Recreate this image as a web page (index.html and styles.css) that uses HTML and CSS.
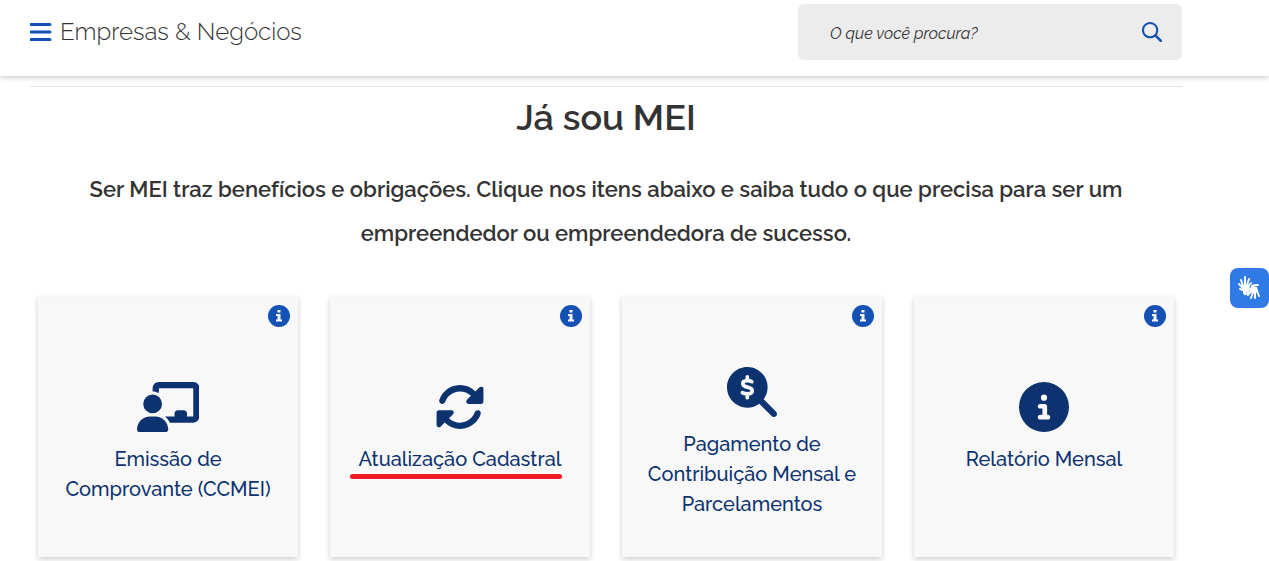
FILE: index.html
```html
<!DOCTYPE html>
<html lang="pt-BR">
<head>
  <meta charset="UTF-8" />
  <meta name="viewport" content="width=device-width, initial-scale=1.0" />
  <title>Empresas &amp; Negócios</title>
  <link rel="stylesheet" href="styles.css">
</head>
<body>
  <!-- shared icons -->
  <svg class="sprite" aria-hidden="true">
    <symbol id="info" viewBox="0 0 512 512">
      <path d="M256 512A256 256 0 1 0 256 0a256 256 0 1 0 0 512zM216 336h24V272H216c-13.3 0-24-10.7-24-24s10.7-24 24-24h48c13.3 0 24 10.7 24 24v88h8c13.3 0 24 10.7 24 24s-10.7 24-24 24H216c-13.3 0-24-10.7-24-24s10.7-24 24-24zm40-208a32 32 0 1 1 0 64 32 32 0 1 1 0-64z"/>
    </symbol>
    <symbol id="info-small" viewBox="0 0 22 22">
      <circle cx="11" cy="11" r="11"/>
      <path fill="#fff" d="M9.5 5h3v2.5h-3zM8 9h4.500v5.500H14V16.500H8V14.500H9.500V11H8z"/>
    </symbol>
  </svg>

  <header class="header">
    <div class="container header-row">
      <div class="brand">
        <button class="icon-btn" type="button" aria-label="Menu">
          <svg width="22" height="24" viewBox="0 0 22 24"><path d="M1 3H20a1.500 1.500 0 0 1 0 3H1a1.500 1.500 0 0 1 0-3zM1 10.500H20a1.500 1.500 0 0 1 0 3H1a1.500 1.500 0 0 1 0-3zM1 18H20a1.500 1.500 0 0 1 0 3H1a1.500 1.500 0 0 1 0-3z"/></svg>
        </button>
        <a class="site-name" href="#">Empresas &amp; Negócios</a>
      </div>
      <form class="search" role="search">
        <input type="text" placeholder="O que você procura?" aria-label="O que você procura?" />
        <button class="icon-btn" type="submit" aria-label="Buscar">
          <svg width="20" height="20" viewBox="0 0 512 512"><path d="M416 208c0 45.9-14.9 88.3-40 122.7L502.6 457.4c12.5 12.5 12.5 32.8 0 45.3s-32.8 12.5-45.3 0L330.7 376c-34.4 25.2-76.8 40-122.7 40C93.1 416 0 322.9 0 208S93.1 0 208 0S416 93.1 416 208zM208 364a156 156 0 1 0 0-312 156 156 0 1 0 0 312z"/></svg>
        </button>
      </form>
    </div>
  </header>

  <main class="container">
    <div class="content">
      <h1>Já sou MEI</h1>
      <p class="intro">Ser MEI traz benefícios e obrigações. Clique nos itens abaixo e saiba tudo o que precisa para ser um empreendedor ou empreendedora de sucesso.</p>

      <div class="cards">
        <div class="card">
          <button class="card-info" type="button" aria-label="Mais informações"><svg width="22" height="22"><use href="#info-small"/></svg></button>
          <a class="card-link" href="#">
            <svg class="card-icon" viewBox="0 0 640 512"><path d="M160 64c0-35.3 28.7-64 64-64H576c35.3 0 64 28.7 64 64V352c0 35.3-28.7 64-64 64H336.8c-11.8-25.5-29.9-47.5-52.4-64H384V320c0-17.7 14.3-32 32-32h64c17.7 0 32 14.3 32 32v32h64V64L224 64v49.1C205.2 102.2 183.3 96 160 96V64zm0 64a96 96 0 1 1 0 192 96 96 0 1 1 0-192zM133.3 352h53.3C260.3 352 320 411.7 320 485.3c0 14.7-11.9 26.7-26.7 26.7H26.7C11.9 512 0 500.1 0 485.3C0 411.7 59.7 352 133.3 352z"/></svg>
            <span class="card-label">Emissão de Comprovante (CCMEI)</span>
          </a>
        </div>

        <div class="card">
          <button class="card-info" type="button" aria-label="Mais informações"><svg width="22" height="22"><use href="#info-small"/></svg></button>
          <a class="card-link" href="#">
            <svg class="card-icon" viewBox="0 0 512 512"><path d="M142.9 142.9c62.2-62.2 162.7-62.5 225.3-1L327 183c-6.9 6.9-8.9 17.2-5.2 26.2s12.5 14.8 22.2 14.8H472c13.3 0 24-10.7 24-24V72c0-9.7-5.8-18.5-14.8-22.2s-19.3-1.7-26.2 5.2L413.4 96.6c-87.6-86.5-228.7-86.2-315.8 1C73.2 122 55.6 150.7 44.8 181.4c-5.9 16.7 2.9 34.9 19.5 40.8s34.9-2.9 40.8-19.5c7.7-21.8 20.2-42.3 37.8-59.8zM16 312V440c0 9.7 5.8 18.5 14.8 22.2s19.3 1.7 26.2-5.2l41.6-41.6c87.6 86.5 228.7 86.2 315.8-1c24.4-24.4 42.1-53.1 52.9-83.7c5.9-16.7-2.9-34.9-19.5-40.8s-34.9 2.9-40.8 19.5c-7.7 21.8-20.2 42.3-37.8 59.8c-62.2 62.2-162.7 62.5-225.3 1L185 329c6.9-6.9 8.9-17.2 5.2-26.2s-12.5-14.8-22.2-14.8H40c-13.3 0-24 10.7-24 24z"/></svg>
            <span class="card-label"><span class="marked">Atualização Cadastral</span></span>
          </a>
        </div>

        <div class="card">
          <button class="card-info" type="button" aria-label="Mais informações"><svg width="22" height="22"><use href="#info-small"/></svg></button>
          <a class="card-link" href="#">
            <svg class="card-icon" viewBox="0 0 512 512">
              <path d="M416 208c0 45.9-14.9 88.3-40 122.7L502.6 457.4c12.5 12.5 12.5 32.8 0 45.3s-32.8 12.5-45.3 0L330.7 376c-34.4 25.2-76.8 40-122.7 40C93.1 416 0 322.9 0 208S93.1 0 208 0S416 93.1 416 208z"/>
              <path class="cutout" d="M208 102v30M208 284v30M254 150c-16-7-34-11-48-10c-29 1-44 14-44 31c0 49 96 22 96 72c0 20-19 33-49 33c-18 0-36-7-51-13"/>
            </svg>
            <span class="card-label">Pagamento de Contribuição Mensal e Parcelamentos</span>
          </a>
        </div>

        <div class="card">
          <button class="card-info" type="button" aria-label="Mais informações"><svg width="22" height="22"><use href="#info-small"/></svg></button>
          <a class="card-link" href="#">
            <svg class="card-icon" viewBox="0 0 512 512"><use href="#info"/></svg>
            <span class="card-label">Relatório Mensal</span>
          </a>
        </div>
      </div>
    </div>
  </main>

  <button class="libras" type="button" aria-label="Conteúdo em Libras">
    <svg width="26" height="26" viewBox="0 0 26 26">
      <path class="palm" d="M6 11l5-2 2 3-3 4-1 3-3-2zM12 14l3-3 5 1 1 4-3 3-5-2z"/>
      <path d="M6 13L2 9M6 11L4 5M8 10L8 2M10 10L12 4M10 13L14 8M6 15L3 14M7 17c0 3 3 3 4 0M15 11c2-1 4-1 6-1M13 14l-3 2M14 16l-3 4M16 17l-2 6M18 17v6M20 16l2 5"/>
    </svg>
  </button>
</body>
</html>
```
FILE: styles.css
```css
* {
  box-sizing: border-box;
}
body {
  margin: 0;
  background: #fff;
  color: #333;
  font-family: "Raleway", "Lato", sans-serif;
}
button {
  padding: 0;
  border: none;
  background: transparent;
  cursor: pointer;
}
svg {
  display: block;
}
a {
  color: inherit;
  text-decoration: none;
}
.sprite {
  display: none;
}
.container {
  padding: 0 87px 0 30px;
}
.header {
  padding: 4px 0 16px;
  box-shadow: 0 1px 6px rgba(0, 0, 0, 0.25);
}
.header-row {
  display: flex;
  justify-content: space-between;
  align-items: center;
}
.brand {
  display: flex;
  align-items: center;
  gap: 8px;
}
.icon-btn {
  fill: #1351b4;
}
.site-name {
  font-size: 24px;
  font-weight: 300;
  line-height: 32px;
}
.search {
  display: flex;
  align-items: center;
  width: 33.33%;
  height: 56px;
  padding: 0 20px 0 32px;
  border-radius: 6px;
  background: #ececec;
}
.search input {
  flex: 1;
  min-width: 0;
  padding: 2px 0 0;
  border: none;
  outline: none;
  background: transparent;
  font: italic 16px "Raleway", "Lato", sans-serif;
  color: #333;
}
.search input::placeholder {
  color: #333;
  opacity: 1;
}
.content {
  margin-top: 10px;
  padding-bottom: 8px;
  border-top: 1px solid #e3e3e3;
  text-align: center;
}
h1 {
  margin: 7px 0 27px;
  font-size: 36px;
  font-weight: 600;
  line-height: 46px;
}
.intro {
  margin: 0 0 42px;
  padding: 0 48px;
  font-size: 22px;
  font-weight: 600;
  line-height: 44px;
}
.cards {
  display: grid;
  grid-template-columns: repeat(4, 1fr);
  gap: 32px;
  padding: 0 8px;
}
.card {
  position: relative;
  min-height: 260px;
  background: #f8f8f8;
  box-shadow: 0 2px 6px rgba(0, 0, 0, 0.2);
}
.card-info {
  position: absolute;
  top: 8px;
  right: 8px;
  fill: #1351b4;
}
.card-link {
  display: flex;
  flex-direction: column;
  align-items: center;
  justify-content: center;
  gap: 12px;
  min-height: 260px;
  padding: 32px 24px 0;
  color: #0c326f;
  fill: #0c326f;
}
.card-icon {
  height: 50px;
}
.cutout {
  fill: none;
  stroke: #f8f8f8;
  stroke-width: 38;
  stroke-linecap: round;
}
.card-label {
  min-height: 60px;
  font-size: 20px;
  font-weight: 500;
  line-height: 30px;
}
.marked {
  position: relative;
}
/* red stroke under the highlighted item */
.marked::after {
  content: "";
  position: absolute;
  left: -9px;
  right: -1px;
  bottom: -8px;
  height: 5px;
  border-radius: 3px;
  background: #ed1c24;
}
.libras {
  position: fixed;
  top: 268px;
  right: 0;
  display: flex;
  align-items: center;
  justify-content: center;
  width: 39px;
  height: 40px;
  border-radius: 8px;
  background: #2f7ae5;
  fill: none;
  stroke: #fff;
  stroke-width: 2;
  stroke-linecap: round;
}
.palm {
  fill: #fff;
  stroke: none;
}
```
